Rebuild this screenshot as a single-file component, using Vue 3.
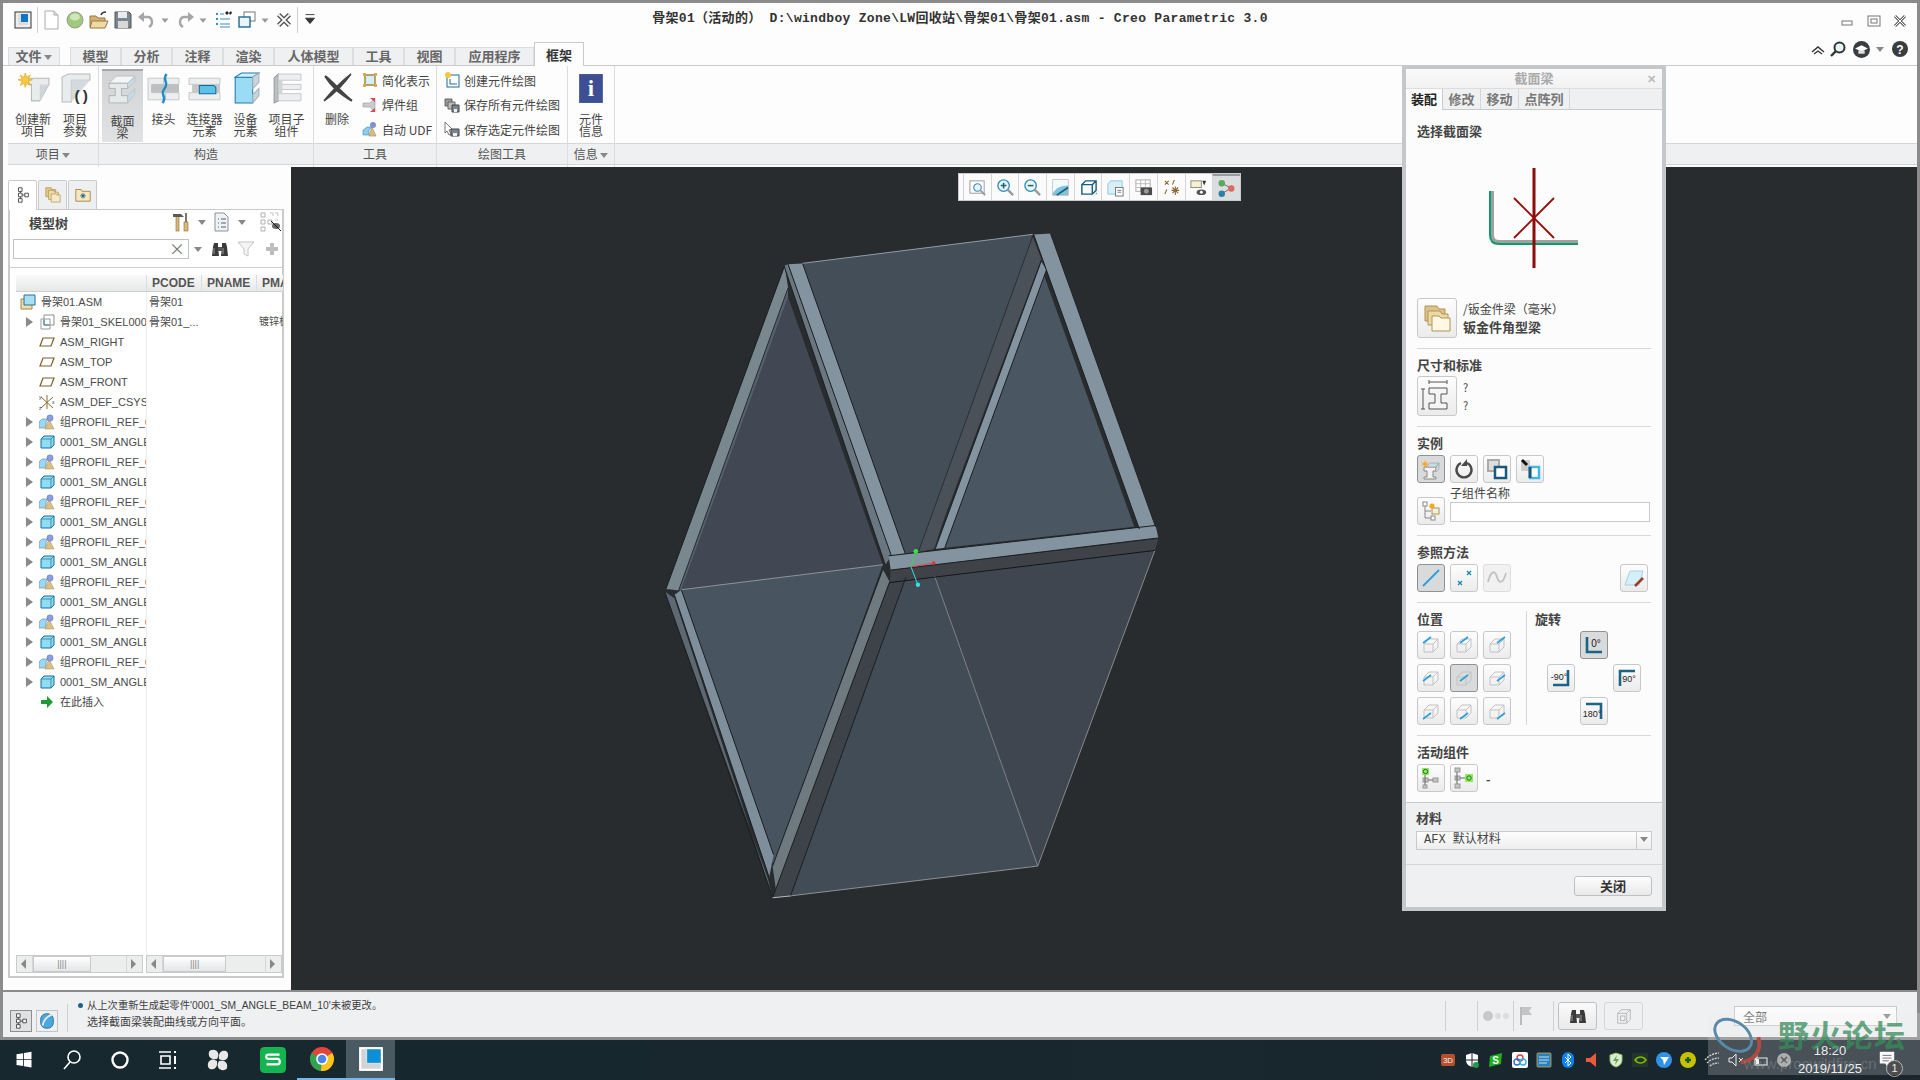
<template>
  <div class="app">
    <div class="window">
      <!-- title bar -->
      <header class="titlebar">
        <div class="quick">
          <template v-for="q in quickIcons" :key="q.key">
            <span v-if="q.sep" class="qsep"></span>
            <svg :class="q.cls" viewBox="0 0 20 20" v-html="icons[q.id]"></svg>
          </template>
        </div>
        <div class="title">骨架01（活动的） D:\windboy Zone\LW回收站\骨架01\骨架01.asm - Creo Parametric 3.0</div>
        <div class="winbtns">
          <svg class="wb" viewBox="0 0 16 16"><rect x="3" y="7" width="10" height="4" fill="none" stroke="#777"/></svg>
          <svg class="wb" viewBox="0 0 16 16"><rect x="2" y="2" width="12" height="10" fill="none" stroke="#777"/><rect x="5" y="5" width="6" height="4" fill="none" stroke="#777"/></svg>
          <svg class="wb" viewBox="0 0 16 16"><path d="M3 2l10 10M13 2L3 12" stroke="#666" stroke-width="3" fill="none"/><path d="M3 2l10 10M13 2L3 12" stroke="#fff" stroke-width="1" fill="none"/></svg>
        </div>
      </header>

      <!-- ribbon tabs -->
      <nav class="tabs">
        <div class="tab file">文件 <i class="caret"></i></div>
        <div class="tab" v-for="t in tabs" :key="t" :class="{ wide: t.length > 2 }">{{ t }}</div>
        <div class="tab active">框架</div>
        <div class="helpers">
          <svg class="hp" viewBox="0 0 16 16"><path d="M2 11l6-5 6 5M4 13l4-3 4 3" fill="none" stroke="#333" stroke-width="1.4"/></svg>
          <svg class="hp" viewBox="0 0 16 16"><circle cx="9.5" cy="6.5" r="5" fill="#e6f3fb" stroke="#333" stroke-width="2"/><path d="M6 10l-5 5" stroke="#333" stroke-width="2.4"/></svg>
          <svg class="hp hat" viewBox="0 0 16 16"><circle cx="8" cy="8" r="8" fill="#3a3d40"/><path d="M2 7l6-3 6 3-6 3z" fill="#fff"/><path d="M5 9v3h6V9" fill="#ddd"/></svg>
          <i class="caret hc"></i>
          <svg class="hp" viewBox="0 0 16 16"><circle cx="8" cy="8" r="8" fill="#3a3d40"/><text x="8" y="12.5" font-size="12" font-weight="700" text-anchor="middle" fill="#fff" font-family="Liberation Sans">?</text></svg>
        </div>
      </nav>

      <!-- ribbon -->
      <section class="ribbon">
        <div class="group g1">
          <div class="gbody">
            <div class="big" v-for="b in bigProject" :key="b.label">
              <svg viewBox="0 0 32 32" v-html="icons[b.icon]"></svg>
              <span v-html="b.label"></span>
            </div>
          </div>
          <div class="glabel">项目 <i class="caret"></i></div>
        </div>
        <div class="group g2">
          <div class="gbody pad3">
            <div class="big" v-for="b in bigBuild" :key="b.label" :class="{ pressed: b.on }">
              <svg viewBox="0 0 32 32" v-html="icons[b.icon]"></svg>
              <span v-html="b.label"></span>
            </div>
          </div>
          <div class="glabel">构造</div>
        </div>
        <div class="group g3">
          <div class="gbody">
            <div class="big del">
              <svg viewBox="0 0 32 32" v-html="icons.del"></svg>
              <span>删除</span>
            </div>
            <div class="smalls">
              <div class="small" v-for="s in toolsList" :key="s.label">
                <svg viewBox="0 0 16 16" v-html="icons[s.icon]"></svg>{{ s.label }}
              </div>
            </div>
          </div>
          <div class="glabel">工具</div>
        </div>
        <div class="group g4">
          <div class="gbody">
            <div class="smalls s2">
              <div class="small" v-for="s in drawList" :key="s.label">
                <svg viewBox="0 0 16 16" v-html="icons[s.icon]"></svg>{{ s.label }}
              </div>
            </div>
          </div>
          <div class="glabel">绘图工具</div>
        </div>
        <div class="group g5">
          <div class="gbody">
            <div class="big info">
              <svg viewBox="0 0 32 32" v-html="icons.info"></svg>
              <span>元件<br />信息</span>
            </div>
          </div>
          <div class="glabel">信息 <i class="caret"></i></div>
        </div>
        <div class="group grest">
          <div class="gbody"></div>
          <div class="glabel"></div>
        </div>
      </section>

      <main class="workspace">
        <!-- model tree -->
        <aside class="side">
          <div class="sidetabs">
            <div class="stab on"><svg viewBox="0 0 16 20" v-html="icons.treeTab"></svg></div>
            <div class="stab"><svg viewBox="0 0 20 20" v-html="icons.folders"></svg></div>
            <div class="stab"><svg viewBox="0 0 20 20" v-html="icons.folderStar"></svg></div>
          </div>
          <div class="panel">
            <div class="treehead">
              <b>模型树</b>
              <svg class="th1" viewBox="0 0 18 20" v-html="icons.hammer"></svg>
              <i class="caret"></i>
              <svg class="th2" viewBox="0 0 18 20" v-html="icons.listdoc"></svg>
              <i class="caret"></i>
              <svg class="th3" viewBox="0 0 22 20" v-html="icons.treeEye"></svg>
            </div>
            <div class="searchrow">
              <div class="search"><span>×</span></div>
              <i class="caret"></i>
              <svg viewBox="0 0 18 18" v-html="icons.binoc"></svg>
              <svg viewBox="0 0 18 18"><path d="M1 2h16l-6 7v7l-4-2V9z" fill="#f4f4f4" stroke="#c4c4c4"/></svg>
              <svg viewBox="0 0 18 18"><path d="M7 3h4v4h4v4h-4v4H7v-4H3V7h4z" fill="#bdbdbd"/></svg>
            </div>
            <div class="tree">
              <div class="row header">
                <div class="cell"></div>
                <div class="cell">PCODE</div>
                <div class="cell">PNAME</div>
                <div class="cell clip">PMA</div>
              </div>
              <div class="row" v-for="r in treeRows" :key="r.key">
                <div class="cell name" :class="{ root: r.icon === 'asm' }">
                  <i v-if="r.arrow" class="arrow"></i>
                  <svg viewBox="0 0 16 16" v-html="icons[r.icon]"></svg>
                  <span>{{ r.name }}</span>
                </div>
                <div class="cell">{{ r.pcode }}</div>
                <div class="cell"></div>
                <div class="cell clip pma">{{ r.pma }}</div>
              </div>
              <div class="row insert">
                <div class="cell name">
                  <svg viewBox="0 0 16 16"><path d="M2 6h6V2l6 6-6 6v-4H2z" fill="#1d9a36"/></svg>
                  <span>在此插入</span>
                </div>
              </div>
            </div>
            <div class="scrolls">
              <div class="sbar" v-for="n in 2" :key="n">
                <i class="sarrow l"></i>
                <div class="track"><div class="thumb"><span>||||</span></div></div>
                <i class="sarrow r"></i>
              </div>
            </div>
          </div>
        </aside>

        <!-- graphics window -->
        <div class="viewport">
          <svg class="model" viewBox="291 166 1626 824" preserveAspectRatio="xMinYMin">
            <g transform="translate(640 220) scale(0.3444 0.4464)">
              <polygon v-for="(p, i) in faces" :key="i" :points="p.pts" :fill="p.fill" />
              <polyline v-for="(l, i) in edges" :key="'e' + i" :points="l.pts" :stroke="l.c" fill="none" vector-effect="non-scaling-stroke" />
              <path d="M787 775L800 740" stroke="#35d948" vector-effect="non-scaling-stroke" />
              <path d="M787 775L853 766" stroke="#e04545" vector-effect="non-scaling-stroke" />
              <path d="M787 775L807 815" stroke="#35e0e0" vector-effect="non-scaling-stroke" />
              <ellipse cx="801" cy="740" rx="7" ry="5" fill="#35e23f" />
              <ellipse cx="853" cy="766" rx="5" ry="4" fill="#e23535" />
              <ellipse cx="807" cy="815" rx="6" ry="5" fill="#35e6e6" />
            </g>
          </svg>
          <div class="viewbar">
            <div class="vb" v-for="v in viewIcons" :key="v" :class="{ on: v === 'vTree' }">
              <svg viewBox="0 0 20 20" v-html="icons[v]"></svg>
            </div>
          </div>
        </div>
      </main>

      <!-- status bar -->
      <footer class="status">
        <div class="sbtn on"><svg viewBox="0 0 16 20" v-html="icons.treeTab"></svg></div>
        <div class="sbtn"><svg viewBox="0 0 20 20" v-html="icons.globe"></svg></div>
        <div class="msgs">
          <p class="m1"><i class="dot"></i>从上次重新生成起零件'0001_SM_ANGLE_BEAM_10'未被更改。</p>
          <p>选择截面梁装配曲线或方向平面。</p>
        </div>
        <div class="sright">
          <span class="sep s1"></span>
          <span class="sep s2"></span>
          <div class="lights"><i></i><i></i><i></i></div>
          <span class="sep s3"></span>
          <svg class="flag" viewBox="0 0 14 20"><path d="M2 1v18" stroke="#bbb" stroke-width="2"/><path d="M3 1h10l-3 4 3 4H3z" fill="#c4c4c4"/></svg>
          <span class="sep s4"></span>
          <div class="srb"><svg viewBox="0 0 18 18" v-html="icons.binoc"></svg></div>
          <div class="srb off"><svg viewBox="0 0 20 20" fill="none" stroke="#b5b5b5"><path d="M3 7l4-4h10v11l-4 4H3zM3 7h10v11M13 7l4-4"/><rect x="6" y="10" width="5" height="5"/></svg></div>
          <div class="filter"><span>全部</span><i class="caret"></i></div>
        </div>
      </footer>
    </div>

    <!-- windows taskbar -->
    <div class="taskbar">
      <div class="task" v-for="t in taskIcons" :key="t.id" :class="t.cls">
        <svg viewBox="0 0 24 24" v-html="icons[t.id]"></svg>
      </div>
      <div class="tray">
        <svg v-for="(t, i) in trayIcons" :key="i" viewBox="0 0 16 16" v-html="icons[t]"></svg>
      </div>
      <div class="clock"><div>18:20</div><div>2019/11/25</div></div>
      <div class="notify">
        <svg viewBox="0 0 20 20"><path d="M2 2h16v13h-6l-2 3-2-3H2z" fill="#fff"/><path d="M5 6h10M5 9h10M5 12h7" stroke="#445" stroke-width="1"/></svg>
        <span>1</span>
      </div>
    </div>

    <!-- forum watermark -->
    <div class="watermark">
      <svg viewBox="0 0 60 60"><ellipse cx="24" cy="22" rx="21" ry="14" transform="rotate(35 24 22)" fill="none" stroke="#5b8aa8" stroke-width="3"/><path d="M32 50c14-2 22-12 18-26" fill="none" stroke="#b04a42" stroke-width="4"/></svg>
      <b>野火论坛</b>
      <small>www.proewildfire.cn</small>
    </div>

    <!-- section beam dialog -->
    <div class="dialog">
      <div class="dtitle">截面梁<span>✕</span></div>
      <div class="dtabs">
        <div class="dtab on">装配</div>
        <div class="dtab">修改</div>
        <div class="dtab">移动</div>
        <div class="dtab w3">点阵列</div>
      </div>
      <div class="dbody">
        <h4>选择截面梁</h4>
        <div class="preview">
          <svg viewBox="0 0 100 100">
            <path d="M3 23v44q0 7 7 7h79" fill="none" stroke="#a1a1a1" stroke-width="4"/>
            <path d="M1 23v44q0 9 9 9h79" fill="none" stroke="#0c9c6a" stroke-width="2"/>
            <path d="M45 0v100" stroke="#8c0b0b" stroke-width="3"/>
            <path d="M25 30l40 40M65 30L25 70" stroke="#980808" stroke-width="1.8"/>
          </svg>
        </div>
        <div class="libline">
          <div class="dbtn big40"><svg viewBox="0 0 32 32" v-html="icons.bigFolders"></svg></div>
          <div class="libtext"><div>/钣金件梁（毫米）</div><b>钣金件角型梁</b></div>
        </div>
        <hr />
        <h4>尺寸和标准</h4>
        <div class="libline tight">
          <div class="dbtn big40"><svg viewBox="0 0 32 32" v-html="icons.dims"></svg></div>
          <div class="qmarks"><div>?</div><div>?</div></div>
        </div>
        <hr />
        <h4>实例</h4>
        <div class="btnrow">
          <div class="dbtn on"><svg viewBox="0 0 22 22" v-html="icons.instNew"></svg></div>
          <div class="dbtn"><svg viewBox="0 0 22 22"><path d="M14 5a7.5 7.5 0 1 1-6 0" fill="none" stroke="#4a4a4a" stroke-width="2.4"/><path d="M14 1v7h-6z" fill="#4a4a4a"/></svg></div>
          <div class="dbtn"><svg viewBox="0 0 22 22"><rect x="2" y="2" width="11" height="11" fill="#ddd" stroke="#aaa" stroke-width="2"/><rect x="9" y="9" width="11" height="11" fill="#fff" stroke="#175a7d" stroke-width="2.5"/></svg></div>
          <div class="dbtn"><svg viewBox="0 0 22 22"><rect x="2" y="2" width="9" height="11" fill="#ccc"/><path d="M3 2l5 5" stroke="#111" stroke-width="3"/><rect x="11" y="9" width="9" height="11" fill="#fff" stroke="#47b6e6" stroke-width="2.5"/><path d="M11 9v11" stroke="#175a7d" stroke-width="3"/></svg></div>
        </div>
        <div class="subline">
          <div class="dbtn"><svg viewBox="0 0 22 22" v-html="icons.subTree"></svg></div>
          <div class="subname"><label>子组件名称</label><div class="dinput"></div></div>
        </div>
        <hr />
        <h4>参照方法</h4>
        <div class="btnrow">
          <div class="dbtn on"><svg viewBox="0 0 22 22"><path d="M3 19L19 3" stroke="#2a9fd8" stroke-width="1.8"/></svg></div>
          <div class="dbtn"><svg viewBox="0 0 22 22"><path d="M5 14l4 4m0-4l-4 4M14 4l4 4m0-4l-4 4" stroke="#1a86b8" stroke-width="1.3"/></svg></div>
          <div class="dbtn off"><svg viewBox="0 0 22 22"><path d="M2 15c3-12 7-12 9-5s6 7 9-4" fill="none" stroke="#c2c2c2" stroke-width="1.8"/></svg></div>
          <div class="dbtn last"><svg viewBox="0 0 22 22"><path d="M7 4h13l-4 14H2z" fill="#d6f0f8" stroke="#a5d3e5"/><path d="M12 19l8-8" stroke="#a03a2c" stroke-width="2.5"/></svg></div>
        </div>
        <hr />
        <div class="posrot">
          <div class="pos">
            <h4>位置</h4>
            <div class="posgrid">
              <div class="dbtn" v-for="(c, i) in cubes" :key="i" :class="{ on: i === 4 }">
                <svg viewBox="0 0 22 22" v-html="c"></svg>
              </div>
            </div>
          </div>
          <div class="rot">
            <h4>旋转</h4>
            <div class="rotgrid">
              <div class="dbtn on r0"><svg viewBox="0 0 22 22" v-html="rot.a"></svg></div>
              <div class="dbtn r1"><svg viewBox="0 0 22 22" v-html="rot.b"></svg></div>
              <div class="dbtn r2"><svg viewBox="0 0 22 22" v-html="rot.c"></svg></div>
              <div class="dbtn r3"><svg viewBox="0 0 22 22" v-html="rot.d"></svg></div>
            </div>
          </div>
        </div>
        <hr />
        <h4>活动组件</h4>
        <div class="btnrow">
          <div class="dbtn"><svg viewBox="0 0 22 22" v-html="icons.active1"></svg></div>
          <div class="dbtn"><svg viewBox="0 0 22 22" v-html="icons.active2"></svg></div>
          <span class="dash">-</span>
        </div>
      </div>
      <div class="material">
        <h4>材料</h4>
        <div class="select"><span>AFX 默认材料</span><div class="selarrow"><i class="caret"></i></div></div>
      </div>
      <div class="dfoot"><button class="close">关闭</button></div>
    </div>
  </div>
</template>

<script setup>
const tabs = ["模型", "分析", "注释", "渲染", "人体模型", "工具", "视图", "应用程序"]

const icons = {
  logo: '<rect x="2" y="2" width="16" height="16" fill="#eee" stroke="#333"/><rect x="5" y="4" width="10" height="11" fill="#0e76c2"/><path d="M5 4v11h10v-3H8V4z" fill="#ddd"/>',
  doc: '<path d="M4 1h9l4 4v14H4z" fill="#fff" stroke="#aaa"/><path d="M13 1v4h4" fill="#ddd" stroke="#aaa"/>',
  ball: '<circle cx="10" cy="10" r="8" fill="#9fca7c" stroke="#999"/><ellipse cx="10" cy="7" rx="5" ry="3.5" fill="#cfe8b6"/>',
  open: '<path d="M1 6h6l2 2h7v9H1z" fill="#d4b070" stroke="#96793e"/><path d="M3 11h16l-3 7H1z" fill="#efd9a4" stroke="#96793e"/><path d="M12 5c1-3 3-3 5-3" stroke="#333" stroke-width="1.6" fill="none"/>',
  save: '<path d="M2 2h14l2 2v14H2z" fill="#7a8793" stroke="#555"/><rect x="5" y="2" width="9" height="6" fill="#e8ecef"/><rect x="5" y="11" width="10" height="7" fill="#d8d8d8"/>',
  undo: '<path d="M5 7h6c4 0 6 7 1 10" fill="none" stroke="#a6a6a6" stroke-width="2.4"/><path d="M7 2v10L1 7z" fill="#a6a6a6"/>',
  redo: '<path d="M15 7H9c-4 0-6 7-1 10" fill="none" stroke="#a6a6a6" stroke-width="2.4"/><path d="M13 2v10l6-5z" fill="#a6a6a6"/>',
  regen: '<path d="M3 3h2v2H3zM3 8h2v2H3zM3 13h2v2H3z" fill="#3a8dbd"/><path d="M7 4h4M7 9h10M7 14h10M7 17h10" stroke="#3a8dbd"/><path d="M12 3l2-2 2 2-2 2zM16 3l2-2 1 2-2 2z" fill="#222"/>',
  wins: '<rect x="7" y="2" width="11" height="9" fill="#fff" stroke="#777"/><rect x="2" y="7" width="11" height="10" fill="#eaf4fa" stroke="#1f6a8f" stroke-width="1.4"/>',
  closeWin: '<path d="M4 4l12 12M16 4L4 16" stroke="#555" stroke-width="5"/><path d="M4 4l12 12M16 4L4 16" stroke="#fff" stroke-width="2"/>',
  custom: '<path d="M5 4h10M5 8l5 6 5-6z" stroke="#333" fill="#333"/>',
  drop: '<path d="M5 8h10l-5 6z" fill="#999"/>',

  newItem: '<path d="M11 6h20v6L22 28h-8V12h-3z" fill="#e9eced" stroke="#b5b9bb"/><path d="M22 12v16l9-16z" fill="#cfd5d8"/><path d="M8 1l1.5 4L13 3l-2 3.5 4 1-4 1.5 2 4-3.5-2L8 15l-1-4-4 2 2-4-4-1.5 4-1L3 3l4 2z" fill="#f7c843" stroke="#e6a317" stroke-width=".6"/>',
  params: '<path d="M3 5l6-3h21v6H12v21H3z" fill="#e9eced" stroke="#b5b9bb"/><path d="M12 8h18l-18 21z" fill="#d4dadd"/><text x="15" y="28" font-size="15" font-weight="700" letter-spacing="3" fill="#333" font-family="Liberation Sans">()</text>',
  beam: '<path d="M3 9l7-7h18l-7 7z" fill="#f3f5f6" stroke="#adb2b5" stroke-width=".7"/><path d="M3 9h18v5h-6v7h6v7H3v-7h6v-7H3z" fill="#e6e9ea" stroke="#9fa4a7" stroke-width=".7"/><path d="M21 9l7-7v5l-7 7zM21 21l7-7v5l-7 9z" fill="#c7dbe6" stroke="#a9bcc6" stroke-width=".6"/>',
  joint: '<path d="M1 6h15v6H5v8h11v7H1z" fill="#eceeef" stroke="#b5b9bb" stroke-width=".7"/><path d="M18 6h13v6H18zM18 20h13v7H18z" fill="#eceeef" stroke="#b5b9bb" stroke-width=".7"/><rect x="4" y="12" width="27" height="8" fill="#bdbfc0"/><path d="M19 2c-5 6 3 8-2 14s3 8-2 14" fill="none" stroke="#1f8dc5" stroke-width="2.4"/>',
  conn: '<path d="M1 6h30v6H1zM1 20h30v7H1z" fill="#eceeef" stroke="#b5b9bb" stroke-width=".7"/><rect x="4" y="12" width="27" height="8" fill="#c5c7c8"/><path d="M11 13h14l2 2v6H11z" fill="#5cc2ea" stroke="#156b96"/>',
  equip: '<path d="M6 5h17v25H6z" fill="#9bdcf5" stroke="#207ba6"/><path d="M6 5l6-4h17l-6 4z" fill="#d2f0fb" stroke="#207ba6"/><path d="M23 5l6-4v9l-6 6zM23 22l6-6v7l-6 7z" fill="#c6d6de" stroke="#a0b0b8"/>',
  sub: '<path d="M4 6l4-4v26l-4 2z" fill="#bcc0c2" stroke="#999"/><path d="M8 2h22v6H8zM8 12h22v5H8zM8 21h22v7H8z" fill="#eceeef" stroke="#b5b9bb" stroke-width=".7"/><path d="M8 8v13h4V8z" fill="#d0d4d6"/>',
  del: '<path d="M4 4c8 6 14 14 26 24-12-7-19-13-26-24z" fill="#444" stroke="#444" stroke-width="2"/><path d="M29 2C20 9 11 18 3 28c10-7 18-15 26-26z" fill="#444" stroke="#444" stroke-width="1.6"/>',
  info: '<rect x="4" y="2" width="23" height="28" fill="#3d4f92"/><text x="15.5" y="23" font-size="22" font-weight="700" fill="#fff" text-anchor="middle" font-family="Liberation Serif">i</text>',

  simp: '<rect x="3" y="3" width="10" height="10" fill="#d4eef6" stroke="#b08a42" stroke-width="1.6"/><path d="M1 1h3v3H1zM12 1h3v3h-3zM1 12h3v3H1zM12 12h3v3h-3z" fill="#d3a95c"/>',
  weld: '<path d="M1 6h7l5-5v14l-5-5H1z" fill="#c8ccce" stroke="#999" stroke-width=".6"/><path d="M8 1l5 4V1zM8 15l5-4v4z" fill="#e0444d"/>',
  udf: '<path d="M1 9l4-3h5l-3 3v5H1z" fill="#8dcaec" stroke="#4490bb" stroke-width=".6"/><path d="M10 6l4 9H7z" fill="#d9bd83" stroke="#a8894a" stroke-width=".6"/><circle cx="11" cy="4" r="3" fill="#7f93d4"/>',
  drawNew: '<rect x="3" y="3" width="12" height="12" fill="#fff" stroke="#1f6a8f"/><path d="M6 7v5h7" fill="none" stroke="#1f6a8f"/><circle cx="4" cy="3" r="3" fill="#f7c843"/>',
  saveAll: '<path d="M1 2h7v7H1z" fill="#999" stroke="#666"/><path d="M4 5h7v7H4z" fill="#bbb" stroke="#666"/><path d="M8 8h7v7H8z" fill="#7a8793" stroke="#444"/><rect x="10" y="12" width="3" height="3" fill="#eee"/>',
  saveSel: '<path d="M1 1l7 7-3 1 2 4-2 1-2-4-2 2z" fill="#fff" stroke="#555" stroke-width=".8"/><path d="M7 8h8v7H7z" fill="#7a8793" stroke="#444"/><rect x="9" y="12" width="4" height="3" fill="#eee"/>',

  treeTab: '<path d="M3 2h4v4H3zM3 8h4v4H3zM3 14h4v4H3zM10 8h4v4h-4z" fill="#fff" stroke="#444"/><path d="M5 6v2M5 12v2M7 10h3" stroke="#444"/>',
  folders: '<path d="M2 3h6l1 2h4v8H2z" fill="#e3c789" stroke="#aa8a48" stroke-width=".7"/><path d="M5 6h6l1 2h4v8H5z" fill="#eedaa8" stroke="#aa8a48" stroke-width=".7"/><path d="M8 10h5l1 1h4v8H8z" fill="#f7e9c6" stroke="#aa8a48" stroke-width=".7"/>',
  folderStar: '<path d="M2 5h6l1 2h9v11H2z" fill="#f6e7c1" stroke="#a58644"/><path d="M10 9v6M7 12h6M8 10l4 4M12 10l-4 4" stroke="#16607f"/>',
  hammer: '<rect x="4" y="4" width="3" height="15" fill="#d8ba7c" stroke="#8a6a2a" stroke-width=".6"/><path d="M1 2h8l3 3H1z" fill="#5a5a5a"/><rect x="13" y="1" width="2" height="9" fill="#777"/><rect x="12" y="10" width="4" height="9" fill="#d8ba7c" stroke="#8a6a2a" stroke-width=".6"/>',
  listdoc: '<path d="M3 1h9l4 4v14H3z" fill="#eef2f4" stroke="#8a9298"/><path d="M6 7h1M9 7h5M6 11h1M9 11h5M6 15h1M9 15h5" stroke="#5a6166"/>',
  treeEye: '<path d="M1 1h4v4H1zM1 8h4v4H1zM1 15h4v4H1zM8 8h4v4H8z" fill="#fff" stroke="#b0b0b0"/><path d="M10 1h3v3M15 1h3v3M15 8h3" fill="none" stroke="#c4c4c4"/><ellipse cx="16" cy="14" rx="4" ry="3" fill="#666"/><path d="M11 9l10 10" stroke="#111"/>',
  binoc: '<path d="M3 3h4v4l1 9H1l1-9zM11 3h4l1 4 1 9h-7l1-9z" fill="#3a3a3a"/><rect x="7" y="7" width="4" height="4" fill="#555"/><path d="M3 8v6M12 8v6" stroke="#999"/>',
  globe: '<rect x="3" y="2" width="14" height="16" rx="6" fill="#4ea6de" stroke="#26709f"/><path d="M5 15c2-8 6-11 12-13" stroke="#dff1fb" stroke-width="2" fill="none"/>',

  asm: '<path d="M1 5h11v10H1z" fill="#f2dfad" stroke="#a58644"/><path d="M4 1h11v10H4z" fill="#a9dff5" stroke="#266e96"/>',
  skel: '<path d="M2 5h9v10H2z" fill="#fff" stroke="#999"/><path d="M5 1h10v10H5z" fill="none" stroke="#8a8f93"/><path d="M5 6v5h5" fill="none" stroke="#3a7ea6"/>',
  plane: '<path d="M4 4h11l-3 8H1z" fill="none" stroke="#7d5c26" stroke-width="1.2"/>',
  csys: '<path d="M2 14L14 3M2 3l12 11M8 1v14" stroke="#8b6a33"/><text x="0" y="5" font-size="5" fill="#333" font-family="Liberation Sans">y</text><text x="0" y="15.5" font-size="5" fill="#333" font-family="Liberation Sans">z</text><text x="13" y="10" font-size="5" fill="#333" font-family="Liberation Sans">x</text>',
  group: '<path d="M0 8l3-3h6l-2 3v6H0z" fill="#9fd6f0" stroke="#3f8fb8" stroke-width=".6"/><path d="M10 5l5 10H6z" fill="#dcbf85" stroke="#a88a4a" stroke-width=".5"/><circle cx="11" cy="4" r="3.2" fill="#8b9ddc" stroke="#5c6db0" stroke-width=".4"/>',
  part: '<path d="M2 5l3-3h10v9l-3 3H2z" fill="#8fdcf7" stroke="#1c6f97"/><path d="M2 5h10v9M12 5l3-3" fill="none" stroke="#1c6f97" stroke-width=".7"/>',

  vFit: '<rect x="2" y="3" width="15" height="13" fill="#fff" stroke="#999"/><circle cx="10" cy="10" r="4" fill="#e6f3fb" stroke="#3a8dbd" stroke-width="1.2"/><path d="M13 13l5 5" stroke="#999" stroke-width="2"/>',
  vIn: '<circle cx="8" cy="8" r="6" fill="#eaf6fc" stroke="#2d8cb4" stroke-width="1.4"/><path d="M5 8h6M8 5v6" stroke="#17617f" stroke-width="1.6"/><path d="M12 12l6 6" stroke="#999" stroke-width="2.4"/>',
  vOut: '<circle cx="8" cy="8" r="6" fill="#eaf6fc" stroke="#2d8cb4" stroke-width="1.4"/><path d="M5 8h6" stroke="#17617f" stroke-width="1.6"/><path d="M12 12l6 6" stroke="#999" stroke-width="2.4"/>',
  vRef: '<rect x="2" y="2" width="16" height="16" fill="#7fc4df" stroke="#aaa"/><path d="M2 2h16v6C10 8 5 11 2 16z" fill="#f2fafd"/><path d="M6 18L18 10" stroke="#16607f" stroke-width="1.8"/>',
  vCube: '<path d="M3 7l4-4h11v10l-4 4H3zM3 7h11v10M14 7l4-4" fill="none" stroke="#14617f" stroke-width="1.5"/><path d="M17 17l2 0 0-2z" fill="#888"/>',
  vCube2: '<path d="M2 6l3-3h12v10l-3 4H2z" fill="#d8eef8" stroke="#8fc6de"/><rect x="10" y="10" width="8" height="9" fill="#fff" stroke="#777"/><path d="M12 13h4M12 15h4" stroke="#777"/>',
  vCam: '<rect x="2" y="2" width="15" height="12" fill="#fff" stroke="#aaa"/><path d="M2 6h15M2 10h15M7 2v12M12 2v12" stroke="#bbb"/><rect x="7" y="10" width="12" height="8" fill="#4a4a4a"/><circle cx="13" cy="14" r="2.6" fill="#999"/>',
  vCsys: '<path d="M3 3l4 4m0-4L3 7M13 2l-2 5M5 12l-2 5M14 9v9M10 13h8M11 10l6 6m0-6l-6 6" stroke="#8b6a33" stroke-width="1.2"/>',
  vShow: '<rect x="2" y="3" width="11" height="7" fill="#f6efd2" stroke="#888"/><path d="M14 3h4l-2 5z" fill="#333"/><ellipse cx="13" cy="15" rx="5" ry="3" fill="#555"/><circle cx="13" cy="15" r="1.5" fill="#fff"/>',
  vTree: '<path d="M6 5l8 4M6 15l8-5" stroke="#666"/><circle cx="5" cy="4.5" r="3.4" fill="#5da65e"/><circle cx="5" cy="15.5" r="3.4" fill="#2e7ea8"/><circle cx="15" cy="10" r="3.4" fill="#d96b62"/>',

  start: '<path d="M3 5l8-1.2V11H3zM12 3.6L21 2v9h-9zM3 12h8v7.2L3 18zM12 12h9v9l-9-1.4z" fill="#fff"/>',
  search: '<circle cx="14" cy="9" r="6" fill="none" stroke="#fff" stroke-width="1.6"/><path d="M10 14l-6 7" stroke="#fff" stroke-width="1.6"/>',
  cortana: '<circle cx="12" cy="12" r="7.5" fill="none" stroke="#fff" stroke-width="2.4"/>',
  taskview: '<path d="M3 4h12M3 20h12M5 8h9v8H5z" fill="none" stroke="#fff" stroke-width="1.6"/><rect x="18" y="3" width="2" height="2" fill="#fff"/><rect x="18" y="8" width="2" height="8" fill="#fff"/><rect x="18" y="19" width="2" height="2" fill="#fff"/>',
  fan: '<path d="M11 11C4 12 2 8 3 4c1-3 8-3 9 1 1 2 0 4-1 6zM13 11c-1-7 3-9 7-8 3 1 3 8-1 9-2 1-4 0-6-1zM13 13c7-1 9 3 8 7-1 3-8 3-9-1-1-2 0-4 1-6zM11 13c1 7-3 9-7 8-3-1-3-8 1-9 2-1 4 0 6 1z" fill="#e8e8e8"/>',
  sheet: '<rect x="0" y="0" width="24" height="24" rx="4" fill="#14b44e"/><path d="M18 7H8c-3 0-3 4 0 4h8c3 0 3 5 0 5H6" fill="none" stroke="#fff" stroke-width="2"/>',
  chrome: '<circle cx="12" cy="12" r="11" fill="#e2453a"/><path d="M12 12L2.5 6.5A11 11 0 0 0 11 23z" fill="#2fa34f"/><path d="M12 12l9.5-5.5A11 11 0 0 1 11 23z" fill="#f9c51d"/><circle cx="12" cy="12" r="5.4" fill="#fff"/><circle cx="12" cy="12" r="4" fill="#4a86e8"/>',
  creo: '<rect x="1" y="1" width="22" height="22" fill="#fff"/><rect x="3" y="3" width="18" height="18" fill="#d4d4d4"/><path d="M8 3h13v13H8z" fill="#0d8fd8"/><path d="M8 3v13h13" fill="none" stroke="#eee" stroke-width=".8"/>',

  t30: '<rect x="1" y="2" width="14" height="12" rx="2" fill="#b5502c"/><text x="8" y="11" font-size="8" text-anchor="middle" fill="#eee" font-family="Liberation Sans">3D</text>',
  tShield: '<path d="M8 1l6 2v5c0 4-3 6-6 7-3-1-6-3-6-7V3z" fill="#fff"/><path d="M8 1v14M2 8h12" stroke="#222" stroke-width="1"/><circle cx="12" cy="13" r="3" fill="#1a9c4c"/>',
  tS: '<path d="M2 4l12-3-1 11-12 3z" fill="#1eb01e"/><text x="7.6" y="12" font-size="10" font-weight="700" text-anchor="middle" fill="#fff" font-family="Liberation Sans">S</text>',
  tBaidu: '<rect x="0" y="0" width="16" height="16" rx="2" fill="#fff"/><circle cx="8" cy="6" r="3" fill="none" stroke="#e23a3a" stroke-width="1.4"/><circle cx="5" cy="10" r="3" fill="none" stroke="#2a6fe6" stroke-width="1.4"/><circle cx="11" cy="10" r="3" fill="none" stroke="#2ab2e6" stroke-width="1.4"/>',
  tBlue: '<rect x="1" y="1" width="14" height="14" rx="1" fill="#2c7fbd" stroke="#c9a84c" stroke-width=".8"/><path d="M3 5h10M3 8h10M3 11h8" stroke="#bfe3f6"/>',
  tBt: '<rect x="2" y="0" width="12" height="16" rx="6" fill="#0a82f0"/><path d="M5 5l6 6-3 3V2l3 3-6 6" fill="none" stroke="#fff"/>',
  tVol: '<path d="M2 6h4l6-5v14l-6-5H2z" fill="#ea5b3b"/>',
  t360: '<path d="M8 1l6 2v5c0 4-3 6-6 7-3-1-6-3-6-7V3z" fill="#dfeadf" stroke="#8cc24a"/><path d="M9 3L5 9h3l-1 4 4-6H8z" fill="#5ea82f"/>',
  tNv: '<rect x="0" y="1" width="16" height="14" fill="#26332e"/><path d="M3 8c3-4 8-4 11 0-3 4-8 4-11 0z" fill="none" stroke="#76b900" stroke-width="1.6"/>',
  tArrow: '<circle cx="8" cy="8" r="8" fill="#2f93ea"/><path d="M4 5l9 0-5 8-1-5z" fill="#fff"/>',
  tPlus: '<circle cx="8" cy="8" r="8" fill="#c7c200"/><path d="M5 8h6M8 5v6" stroke="#1d5a1d" stroke-width="2.4"/>',
  tWifi: '<path d="M1 8c4-5 10-7 14-7M3 11c3-3 7-5 12-5M6 14c2-2 5-3 9-3" fill="none" stroke="#ddd" stroke-width="1.2" stroke-dasharray="2 1"/>',
  tMute: '<path d="M1 6h3l4-4v12l-4-4H1z" fill="none" stroke="#eee"/><path d="M11 6l4 4m0-4l-4 4" stroke="#eee"/>',
  tBat: '<rect x="3" y="6" width="12" height="7" fill="none" stroke="#eee"/><rect x="4" y="7" width="3" height="5" fill="#eee"/><path d="M2 2v4h3V2M3.500 6v2" stroke="#eee"/>',
  tX: '<circle cx="8" cy="8" r="7" fill="#9a9a9a"/><path d="M5 5l6 6m0-6l-6 6" stroke="#333" stroke-width="1.6"/>',

  bigFolders: '<path d="M4 4h12l2 3h6v12H4z" fill="#dcc387" stroke="#b09450"/><path d="M7 9h12l2 3h6v11H7z" fill="#ecd9a8" stroke="#b09450"/><path d="M11 14h7l2 2h9v13H11z" fill="#fff8e4" stroke="#b09450"/>',
  dims: '<path d="M8 2h18M8 0v4M26 0v4M2 9v20M0 9h4M0 29h4" stroke="#555" fill="none"/><path d="M8 8h18v6h-6v9h6v6H8v-6h6v-9H8z" fill="#f5f5f5" stroke="#555"/>',
  instNew: '<path d="M4 9h12v4h-3v6h3v2H4v-2h3v-6H4z" fill="#f2f2f2" stroke="#888"/><path d="M10 5h9l-3 4H6zM16 9l3-4v6l-3 3z" fill="#c8dce6" stroke="#999" stroke-width=".6"/><path d="M5 2l1 3 3-1-2 2 2 2-3-1-1 3-1-3-3 1 2-2-2-2 3 1z" fill="#f7a81c"/>',
  subTree: '<rect x="3" y="2" width="4" height="4" fill="#fff" stroke="#888"/><rect x="11" y="16" width="4" height="4" fill="#fff" stroke="#888"/><path d="M5 6v12h6M5 11h6" stroke="#888" fill="none"/><rect x="12" y="8" width="7" height="6" fill="#e5f2f8" stroke="#c08f34"/><circle cx="12" cy="6" r="2.6" fill="#f7a81c"/>',
  active1: '<rect x="2" y="1" width="7" height="7" fill="#92e85e"/><circle cx="5.500" cy="4.500" r="2.2" fill="none" stroke="#0c7a22"/><rect x="3" y="11" width="5" height="4" fill="#c4c4c4" stroke="#999"/><rect x="3" y="18" width="4" height="3" fill="#c4c4c4" stroke="#999"/><rect x="13" y="11" width="5" height="4" fill="#c4c4c4" stroke="#999"/><path d="M5 8v10M8 13h5" stroke="#666"/>',
  active2: '<rect x="2" y="1" width="5" height="4" fill="#c4c4c4" stroke="#999"/><rect x="2" y="9" width="5" height="4" fill="#c4c4c4" stroke="#999"/><rect x="2" y="17" width="5" height="4" fill="#c4c4c4" stroke="#999"/><path d="M4 5v12M7 11h5" stroke="#666"/><rect x="12" y="7" width="8" height="8" fill="#92e85e"/><circle cx="16" cy="11" r="2.2" fill="none" stroke="#0c7a22"/>'
}

const quickIcons = [
  { id: "logo", cls: "qi" },
  { id: "doc", cls: "qi", sep: true },
  { id: "ball", cls: "qi" },
  { id: "open", cls: "qi" },
  { id: "save", cls: "qi" },
  { id: "undo", cls: "qi" },
  { id: "drop", cls: "qd" },
  { id: "redo", cls: "qi" },
  { id: "drop", cls: "qd" },
  { id: "regen", cls: "qi" },
  { id: "wins", cls: "qi" },
  { id: "drop", cls: "qd" },
  { id: "closeWin", cls: "qx" },
  { id: "custom", cls: "qx", sep: true }
].map((q, i) => ({ ...q, key: i }))

const bigProject = [
  { label: "创建新<br>项目", icon: "newItem" },
  { label: "项目<br>参数", icon: "params" }
]

const bigBuild = [
  { label: "截面<br>梁", icon: "beam", on: true },
  { label: "接头", icon: "joint" },
  { label: "连接器<br>元素", icon: "conn" },
  { label: "设备<br>元素", icon: "equip" },
  { label: "项目子<br>组件", icon: "sub" }
]

const toolsList = [
  { label: "简化表示", icon: "simp" },
  { label: "焊件组", icon: "weld" },
  { label: "自动 UDF", icon: "udf" }
]

const drawList = [
  { label: "创建元件绘图", icon: "drawNew" },
  { label: "保存所有元件绘图", icon: "saveAll" },
  { label: "保存选定元件绘图", icon: "saveSel" }
]

const treeRows = [
  { name: "骨架01.ASM", pcode: "骨架01", icon: "asm" },
  { name: "骨架01_SKEL0001", pcode: "骨架01_...", pma: "镀锌板", icon: "skel", arrow: true },
  { name: "ASM_RIGHT", icon: "plane" },
  { name: "ASM_TOP", icon: "plane" },
  { name: "ASM_FRONT", icon: "plane" },
  { name: "ASM_DEF_CSYS", icon: "csys" }
]
for (let i = 0; i < 14; i++) {
  treeRows.push(
    i % 2 === 0
      ? { name: "组PROFIL_REF_0001", icon: "group", arrow: true }
      : { name: "0001_SM_ANGLE_BEAM", icon: "part", arrow: true }
  )
}
treeRows.forEach((r, i) => (r.key = i))

const viewIcons = ["vFit", "vIn", "vOut", "vRef", "vCube", "vCube2", "vCam", "vCsys", "vShow", "vTree"]

const taskIcons = [
  { id: "start", cls: "t-start" },
  { id: "search" },
  { id: "cortana" },
  { id: "taskview" },
  { id: "fan", cls: "t-fan" },
  { id: "sheet", cls: "t-app first" },
  { id: "chrome", cls: "t-app open" },
  { id: "creo", cls: "t-app current" }
]

const trayIcons = ["t30", "tShield", "tS", "tBaidu", "tBlue", "tBt", "tVol", "t360", "tNv", "tArrow", "tPlus", "tWifi", "tMute", "tBat", "tX"]

// cube buttons: the blue edge moves with the grid position
const cubes = []
for (let r = 0; r < 3; r++) {
  for (let c = 0; c < 3; c++) {
    const dx = c * 4 - 4
    const dy = r * 5 - 5
    cubes.push(
      '<path d="M4 10l5-5h9v8l-5 5H4zM4 10h9v8M13 10l5-5" fill="none" stroke="#c2c2c2"/>' +
      `<path d="M${7 + dx} ${14 + dy}L${15 + dx} ${8 + dy}" stroke="#2a9fd8" stroke-width="1.6"/>`
    )
  }
}

const rotLabel = (t, x, y, s = 10) => `<text x="${x}" y="${y}" font-size="${s}" fill="#222" text-anchor="middle" font-family="Liberation Sans">${t}</text>`
const rot = {
  a: '<path d="M4 3v15h15" fill="none" stroke="#1b6485" stroke-width="2.6"/>' + rotLabel("0°", 13, 13),
  b: '<path d="M3 18h15V3" fill="none" stroke="#1b6485" stroke-width="2.6"/>' + rotLabel("-90°", 9, 13, 9),
  c: '<path d="M4 19V4h15" fill="none" stroke="#1b6485" stroke-width="2.6"/>' + rotLabel("90°", 13, 15, 9),
  d: '<path d="M3 4h15v15" fill="none" stroke="#1b6485" stroke-width="2.6"/>' + rotLabel("180°", 9, 17, 9)
}

// frame model, points measured in the enlarged crop of the graphics area
const faces = [
  { fill: "#434e58", pts: "470,95 1140,30 855,735 770,745" },
  { fill: "#4a5762", pts: "1172,120 1435,685 885,732" },
  { fill: "#414854", pts: "430,170 705,770 120,826" },
  { fill: "#48545f", pts: "120,826 705,770 388,1445" },
  { fill: "#414c56", pts: "770,800 435,1512 1155,1445 855,795" },
  { fill: "#404650", pts: "855,795 1495,738 1155,1445" },
  { fill: "#79878f", pts: "420,100 430,150 112,828 85,825 75,825" },
  { fill: "#56606c", pts: "430,150 430,170 120,826 112,828" },
  { fill: "#6a7680", pts: "418,100 430,97 730,750 712,770" },
  { fill: "#8493a0", pts: "430,97 472,95 770,745 730,750" },
  { fill: "#4b5159", pts: "1140,35 1165,85 850,735 808,742" },
  { fill: "#8493a0", pts: "1165,90 1180,110 885,732 857,735" },
  { fill: "#6d7882", pts: "1192,28 1205,60 1505,710 1497,685" },
  { fill: "#8493a0", pts: "1143,30 1192,28 1497,685 1450,690" },
  { fill: "#8493a0", pts: "722,750 1497,682 1505,710 728,782" },
  { fill: "#3f4347", pts: "728,782 1505,712 1495,738 725,810" },
  { fill: "#5d6872", pts: "72,830 100,845 385,1515 370,1470" },
  { fill: "#7f8e9b", pts: "100,838 120,826 388,1420 375,1470" },
  { fill: "#6f7a80", pts: "705,780 725,808 395,1500 385,1445" },
  { fill: "#3d4349", pts: "725,808 772,798 437,1512 385,1516" }
]

const edges = [
  { c: "#969ca2", pts: "470,95 1140,30" },
  { c: "#8f959a", pts: "120,826 705,770" },
  { c: "#7f848a", pts: "855,795 1155,1445" },
  { c: "#868a8e", pts: "1495,738 1155,1445" },
  { c: "#8d9194", pts: "435,1512 1155,1445" },
  { c: "#1b1f23", pts: "430,97 730,750" },
  { c: "#1b1f23", pts: "472,95 770,745" },
  { c: "#1b1f23", pts: "418,100 712,770" },
  { c: "#1b1f23", pts: "1143,30 1450,690" },
  { c: "#1b1f23", pts: "1192,28 1497,685" },
  { c: "#1b1f23", pts: "722,750 1497,682" },
  { c: "#1b1f23", pts: "728,782 1505,710" },
  { c: "#14171a", pts: "725,810 1495,738" },
  { c: "#1b1f23", pts: "1165,90 857,735" },
  { c: "#2b3035", pts: "1140,35 808,742" },
  { c: "#1b1f23", pts: "1180,110 885,732" },
  { c: "#1b1f23", pts: "725,808 385,1516" },
  { c: "#1b1f23", pts: "705,780 385,1445" },
  { c: "#1b1f23", pts: "772,798 437,1512" },
  { c: "#1b1f23", pts: "120,826 388,1420" },
  { c: "#1b1f23", pts: "100,838 375,1470" },
  { c: "#1b1f23", pts: "72,830 385,1515" },
  { c: "#1b1f23", pts: "75,825 420,100" },
  { c: "#2a2f34", pts: "112,828 430,150" },
  { c: "#b9bec2", pts: "385,1516 437,1512" }
]
</script>

<style>
html,
body {
  margin: 0;
  background: #1b2930;
  overflow: hidden;
}
</style>

<style scoped>
.app {
  position: relative;
  width: 1920px;
  height: 1080px;
  overflow: hidden;
  font-family: "Noto Sans CJK SC", "Liberation Sans", sans-serif;
  font-size: 12px;
  color: #444;
}

.window {
  height: 1040px;
  box-sizing: border-box;
  border: 3px solid #8b8b8b;
  background: #fdfdfd;
  display: flex;
  flex-direction: column;
}

/* title bar */

.titlebar {
  height: 44px;
  flex: none;
  display: grid;
  grid-template-columns: 1fr auto 1fr;
  align-items: start;
}

.quick {
  display: flex;
  align-items: center;
  height: 34px;
  padding-left: 10px;
  gap: 4px;
}

.qi {
  width: 20px;
  height: 20px;
  flex: none;
}

.qd {
  width: 14px;
  height: 14px;
  margin: 0 -1px 0 -3px;
  flex: none;
}

.qx {
  width: 18px;
  height: 18px;
  flex: none;
}

.qsep {
  width: 1px;
  height: 26px;
  background: #cfd0d2;
  margin-right: -1px;
  flex: none;
}

.title {
  font-family: "Liberation Mono", "Noto Sans CJK SC", monospace;
  font-size: 13px;
  font-weight: 700;
  color: #333;
  line-height: 32px;
  letter-spacing: 0.3px;
}

.winbtns {
  display: flex;
  justify-content: flex-end;
  gap: 10.500px;
  padding: 11px 9px 0 0;
}

.wb {
  width: 16px;
  height: 16px;
}

/* tabs */

.tabs {
  height: 18px;
  flex: none;
  display: flex;
  padding-left: 5px;
  border-bottom: 1px solid #c8cacc;
  font-weight: 700;
  font-size: 13px;
}

.tab {
  width: 51px;
  height: 18px;
  box-sizing: border-box;
  background: #eff0f2;
  border: 1px solid #dcdddf;
  border-bottom: none;
  text-align: center;
  line-height: 15px;
  color: #666;
}

.tab.wide {
  width: 79px;
}

.tab.file {
  width: 52px;
  margin-right: 10px;
}

.tab.active {
  height: 24px;
  margin-top: -5px;
  width: 50px;
  background: #fdfdfd;
  border-color: #c8cacc;
  color: #333;
  line-height: 24px;
  position: relative;
}

.caret {
  display: inline-block;
  width: 0;
  height: 0;
  border: 4px solid transparent;
  border-top: 5px solid #888;
  border-bottom: none;
  vertical-align: middle;
}

.helpers {
  margin-left: auto;
  display: flex;
  align-items: center;
  gap: 4px;
  height: 18px;
  margin-top: -7px;
  padding-right: 9px;
}

.hp {
  width: 16px;
  height: 16px;
}

.hp.hat {
  width: 17px;
  height: 17px;
  margin-left: 3px;
}

.hc {
  margin: 0 4px 0 2px;
}

/* ribbon */

.ribbon {
  height: 101px;
  flex: none;
  display: flex;
  padding-left: 5px;
}

.group {
  display: flex;
  flex-direction: column;
  flex: none;
  border-right: 1px solid #dcdddf;
  box-sizing: border-box;
}

.g1 { width: 91px; }
.g2 { width: 215px; }
.g3 { width: 123px; }
.g4 { width: 131px; }
.g5 { width: 47px; }

.grest {
  flex: 1;
  border-right: none;
}

.gbody {
  height: 77px;
  display: flex;
  flex: none;
  padding-left: 4px;
}

.gbody.pad3 {
  padding-left: 3px;
}

.glabel {
  height: 22px;
  margin-bottom: 1px;
  background: #eff0f2;
  border-top: 1px solid #d5d6d8;
  border-bottom: 1px solid #d5d6d8;
  box-sizing: border-box;
  text-align: center;
  line-height: 20px;
  color: #555;
}

.big {
  width: 42px;
  height: 73px;
  margin-top: 3px;
  flex: none;
  box-sizing: border-box;
  padding-top: 3px;
  display: flex;
  flex-direction: column;
  align-items: center;
  text-align: center;
  line-height: 12px;
}

.g2 .big {
  width: 41px;
}

.big svg {
  width: 33px;
  height: 33px;
  flex: none;
}

.big span {
  margin-top: 8px;
  display: block;
}

.big.pressed {
  background: linear-gradient(#d2d3d5, #e1e2e3);
  border-top: 2px solid #a4a6a8;
}

.big.del {
  margin-left: -2px;
}

.big.info {
  margin: 3px 0 0 -2px;
}

.smalls {
  display: flex;
  flex-direction: column;
  padding: 2px 0 0 4px;
}

.smalls.s2 {
  padding-left: 3px;
}

.small {
  height: 24.500px;
  display: flex;
  align-items: center;
  gap: 4px;
  white-space: nowrap;
}

.small svg {
  width: 16px;
  height: 16px;
  flex: none;
}

/* workspace */

.workspace {
  flex: 1;
  min-height: 0;
  display: flex;
}

.side {
  width: 288px;
  flex: none;
  box-sizing: border-box;
  padding: 13px 0 12px 5px;
  display: flex;
  flex-direction: column;
  background: #fdfdfd;
}

.sidetabs {
  display: flex;
  gap: 1px;
  height: 29px;
  flex: none;
}

.stab {
  width: 29px;
  box-sizing: border-box;
  height: 29px;
  padding-bottom: 2px;
  background: #eeeff1;
  border: 1px solid #c8cacc;
  border-bottom: none;
  border-radius: 2px 2px 0 0;
  display: flex;
  align-items: center;
  justify-content: center;
}

.stab.on {
  background: #fff;
  height: 30px;
  position: relative;
  z-index: 1;
}

.stab svg {
  width: 18px;
  height: 18px;
}

.panel {
  flex: 1;
  min-height: 0;
  width: 276px;
  box-sizing: border-box;
  border: 2px solid #c8cacc;
  border-top-width: 1px;
  background: #fff;
  display: flex;
  flex-direction: column;
}

.treehead {
  height: 28px;
  box-sizing: border-box;
  padding: 0 0 4px 19px;
  display: flex;
  align-items: center;
  flex: none;
}

.treehead b {
  font-size: 13px;
  width: 143px;
}

.treehead svg {
  width: 18px;
  height: 20px;
}

.treehead .caret {
  margin: 0 6px 0 8px;
}

.treehead .th3 {
  width: 22px;
  margin-left: 8px;
}

.searchrow {
  height: 22px;
  flex: none;
  display: flex;
  align-items: center;
  padding: 0 0 7px 3px;
  border-bottom: 1px solid #cfd0d2;
}

.search {
  width: 176px;
  flex: none;
  height: 20px;
  box-sizing: border-box;
  border: 1px solid #c0c2c4;
  background: #fff;
  text-align: right;
  padding-right: 3px;
  color: #777;
  font-size: 16px;
  line-height: 17px;
}

.searchrow svg {
  width: 18px;
  height: 18px;
  flex: none;
  margin-left: 8px;
}

.searchrow .caret {
  margin-left: 5px;
  flex: none;
}

.searchrow .caret + svg {
  margin-left: 9px;
}

.tree {
  flex: 1;
  min-height: 0;
  margin: 7px 0 0 6px;
  width: 267px;
  overflow: hidden;
  background: linear-gradient(#eceded, #eceded) 130px 0 / 1px 100% no-repeat;
  font-family: "Liberation Sans", "Noto Sans CJK SC", sans-serif;
  font-size: 11px;
}

.row {
  display: grid;
  grid-template-columns: 130px 55px 55px 27px;
  height: 20px;
  line-height: 20px;
  align-items: center;
  color: #4a4a4a;
  white-space: nowrap;
}

.row.header {
  height: 16px;
  line-height: 16px;
  background: linear-gradient(#fafafa, #e6e7e8);
  border-bottom: 1px solid #cfd0d2;
  box-sizing: content-box;
  color: #555;
  font-weight: 700;
  font-size: 12px;
}

.row.header .cell {
  padding-left: 5px;
  border-left: 1px solid #dcdddf;
  height: 16px;
}

.row.header .cell:first-child {
  border-left: none;
}

.cell {
  overflow: hidden;
  box-sizing: border-box;
  padding-left: 3px;
}

.cell.clip {
  overflow: hidden;
}

.row.header .cell.clip {
  padding-left: 5px;
}

.cell.pma {
  font-size: 10px;
}

.cell.name {
  position: relative;
  display: flex;
  align-items: center;
  height: 20px;
  padding-left: 23px;
}

.cell.name.root {
  padding-left: 4px;
}

.cell.name svg {
  width: 16px;
  height: 16px;
  flex: none;
  margin-right: 5px;
}

.arrow {
  position: absolute;
  left: 10px;
  top: 5px;
  border: 5px solid transparent;
  border-left: 7px solid #8a8a8a;
  border-right: none;
}

.insert {
  color: #444;
  font-size: 11px;
}

.scrolls {
  height: 20px;
  flex: none;
  display: flex;
  gap: 3px;
  margin: 0 0 0 6px;
  padding-bottom: 1px;
}

.sbar {
  display: flex;
  align-items: stretch;
  height: 18px;
  flex: 1;
  background: #eceded;
  border: 1px solid #c8cacc;
  box-sizing: border-box;
}

.sbar:first-child {
  flex: 0 0 127px;
}

.sarrow {
  width: 15px;
  position: relative;
}

.sarrow::after {
  content: "";
  position: absolute;
  top: 3px;
  left: 4px;
  border: 5px solid transparent;
  border-right: none;
  border-left: 5px solid #888;
}

.sarrow.l::after {
  border-left: none;
  border-right: 5px solid #888;
}

.track {
  flex: 1;
  border-left: 1px solid #d5d6d8;
  border-right: 1px solid #d5d6d8;
}

.thumb {
  width: 62%;
  height: 100%;
  box-sizing: border-box;
  background: linear-gradient(#fff, #e4e5e6);
  border: 1px solid #fff;
  outline: 1px solid #c8cacc;
  outline-offset: -1px;
  text-align: center;
  line-height: 14px;
  font-size: 9px;
  color: #888;
  letter-spacing: 0;
  font-family: "Liberation Sans", sans-serif;
}

/* graphics */

.viewport {
  flex: 1;
  position: relative;
  background: #292c2e;
  overflow: hidden;
}

.model {
  position: absolute;
  left: 0;
  top: 0;
  width: 1626px;
  height: 824px;
}

.viewbar {
  position: absolute;
  left: 667px;
  top: 6px;
  height: 28px;
  box-sizing: border-box;
  display: flex;
  background: #fbfbfb;
  border: 1px solid #c8cacc;
  padding-left: 4px;
}

.vb {
  width: 27.700px;
  height: 26px;
  box-sizing: border-box;
  display: flex;
  align-items: center;
  justify-content: center;
  border-left: 1px solid #d5d6d8;
  flex: none;
}

.vb.on {
  background: #dcddde;
  border-top: 2px solid #9a9c9e;
}

.vb svg {
  width: 19px;
  height: 19px;
}

/* status */

.status {
  height: 47px;
  flex: none;
  display: flex;
  position: relative;
  align-items: flex-end;
  box-sizing: border-box;
  background: #eff0f2;
  border-top: 2px solid #8b8b8b;
  padding: 0 0 5px 7px;
  gap: 4px;
}

.sbtn {
  width: 22px;
  height: 22px;
  box-sizing: border-box;
  border: 1px solid #c2c4c6;
  display: flex;
  align-items: center;
  justify-content: center;
}

.sbtn.on {
  background: #e0e1e3;
  border-color: #8e8e8e;
}

.sbtn svg {
  width: 18px;
  height: 18px;
}

.msgs {
  margin-left: 5px;
  padding-left: 19px;
  border-left: 1px solid #cfd0d2;
  height: 28px;
  position: relative;
  font-size: 11px;
  color: #3e3e3e;
  font-family: "Liberation Sans", "Noto Sans CJK SC", sans-serif;
}

.msgs p {
  margin: 0;
  height: 17px;
  line-height: 17px;
  white-space: nowrap;
  position: relative;
  top: -7px;
}

.msgs .m1 {
  font-size: 10.300px;
}

.dot {
  position: absolute;
  left: -9px;
  top: 6px;
  width: 5px;
  height: 5px;
  border-radius: 50%;
  background: #1b6485;
}

.sright {
  margin-left: auto;
  display: flex;
  align-items: center;
  height: 42px;
  align-self: center;
  padding-right: 20px;
  position: relative;
  top: 4px;
}

.sep {
  width: 1px;
  height: 30px;
  background: #cfd0d2;
}

.sep.s2 {
  margin-left: 31px;
}

.lights {
  display: flex;
  align-items: center;
  gap: 2px;
  margin-left: 5px;
  width: 30px;
}

.lights i {
  width: 6px;
  height: 6px;
  border-radius: 50%;
  background: #dcdcdc;
}

.lights i:first-child {
  width: 10px;
  height: 10px;
  background: #c8c8c8;
}

.sep.s3 {
  margin-right: 5px;
}

.flag {
  width: 14px;
  height: 20px;
}

.sep.s4 {
  margin: 0 4px 0 20px;
}

.srb {
  width: 39px;
  height: 28px;
  box-sizing: border-box;
  border: 1px solid #bfc0c2;
  border-radius: 3px;
  display: flex;
  align-items: center;
  justify-content: center;
  margin-right: 7px;
  background: linear-gradient(#fafafa, #eaeaea);
}

.srb.off {
  background: #eff0f2;
  border-color: #d5d6d8;
}

.srb svg {
  width: 18px;
  height: 18px;
}

.filter {
  margin-left: 84px;
  width: 163px;
  height: 20px;
  box-sizing: border-box;
  background: #fbfbfb;
  border: 1px solid #c8cacc;
  display: flex;
  align-items: center;
  justify-content: space-between;
  padding: 0 5px 0 8px;
  color: #666;
}

/* taskbar */

.taskbar {
  height: 40px;
  display: flex;
  position: relative;
  background: linear-gradient(90deg, #17282f, #1a262e);
  color: #eee;
}

.task {
  width: 48px;
  height: 40px;
  display: flex;
  align-items: center;
  justify-content: center;
  box-sizing: border-box;
  flex: none;
}

.task svg {
  width: 24px;
  height: 24px;
}

.t-start svg {
  width: 20px;
  height: 20px;
}

.t-fan {
  width: 52px;
}

.t-app {
  width: 49px;
}

.t-app.first {
  margin-left: 4px;
}

.t-app.open {
  border-bottom: 2px solid #76b9ed;
}

.t-app.current {
  background: #4a5a63;
  border-bottom: 2px solid #76b9ed;
}

.t-app svg {
  width: 26px;
  height: 26px;
}

.tray {
  position: absolute;
  left: 1440px;
  top: 12px;
  display: flex;
  gap: 8px;
}

.tray svg {
  width: 16px;
  height: 16px;
}

.clock {
  position: absolute;
  left: 1790px;
  width: 80px;
  top: 2px;
  text-align: center;
  font-size: 13px;
  line-height: 18px;
  font-family: "Liberation Sans", sans-serif;
  white-space: nowrap;
}

.notify {
  position: absolute;
  left: 1878px;
  top: 10px;
}

.notify svg {
  width: 18px;
  height: 18px;
  display: block;
}

.notify span {
  position: absolute;
  left: 8px;
  top: 10px;
  width: 15px;
  height: 15px;
  border-radius: 50%;
  border: 1px solid #aaa;
  background: #222;
  text-align: center;
  line-height: 15px;
  font-size: 11px;
  font-family: "Liberation Sans", sans-serif;
}

/* watermark over the status bar corner */

.watermark {
  position: absolute;
  left: 1708px;
  top: 1013px;
  width: 212px;
  height: 62px;
  background: rgba(235, 235, 235, 0.22);
  pointer-events: none;
}

.watermark svg {
  position: absolute;
  left: 2px;
  top: 1px;
  width: 58px;
  height: 58px;
}

.watermark b {
  position: absolute;
  left: 70px;
  top: 3px;
  font-size: 31px;
  line-height: 36px;
  color: rgba(56, 140, 90, 0.75);
  letter-spacing: 1px;
  white-space: nowrap;
}

.watermark small {
  position: absolute;
  left: 36px;
  top: 42px;
  font-size: 15px;
  color: rgba(255, 255, 255, 0.18);
  white-space: nowrap;
  font-family: "Liberation Sans", sans-serif;
}

/* dialog */

.dialog {
  position: absolute;
  left: 1402px;
  top: 65px;
  width: 264px;
  height: 846px;
  box-sizing: border-box;
  border: 4px solid #c4c8ca;
  background: #fcfcfc;
  display: flex;
  flex-direction: column;
}

.dtitle {
  height: 19px;
  flex: none;
  background: linear-gradient(#fafafa, #f2f2f2);
  border-bottom: 1px solid #dcdddf;
  text-align: center;
  font-weight: 700;
  font-size: 13px;
  line-height: 18px;
  color: #aaa;
  position: relative;
}

.dtitle span {
  position: absolute;
  right: 6px;
  top: 0;
  font-size: 11px;
  color: #bbb;
}

.dtabs {
  height: 20px;
  flex: none;
  display: flex;
  background: #eff0f2;
  border-bottom: 1px solid #c8cacc;
  font-weight: 700;
  font-size: 13px;
  color: #777;
  box-sizing: content-box;
}

.dtab {
  width: 38px;
  height: 20px;
  box-sizing: border-box;
  line-height: 20px;
  text-align: center;
  border-right: 1px solid #d5d6d8;
}

.dtab.w3 {
  width: 51px;
}

.dtab.on {
  width: 37px;
  background: #fcfcfc;
  color: #222;
  height: 21px;
  border-right: 1px solid #c8cacc;
}

.dbody {
  flex: 1;
  padding: 0 11px;
  overflow: hidden;
}

h4 {
  margin: 0;
  padding-bottom: 2px;
  font-size: 13px;
  font-weight: 700;
  line-height: 16px;
  color: #444;
}

.dbody > h4:first-child {
  margin-top: 13px;
}

.preview {
  height: 157px;
  display: flex;
  justify-content: center;
}

.preview svg {
  width: 100px;
  height: 100px;
  margin: 27px 0 0 10px;
}

.libline {
  display: flex;
  gap: 6px;
}

.libtext {
  padding-top: 2px;
  font-size: 12px;
  line-height: 18px;
}

.libtext b {
  font-size: 13px;
  color: #444;
}

.tight {
  margin-top: 1px;
}

.qmarks {
  line-height: 18px;
  padding-top: 2px;
  font-size: 11px;
}

hr {
  border: none;
  border-top: 1px solid #d8d9da;
  margin: 10px 0 8px;
  height: 0;
}

.dbtn {
  width: 28px;
  height: 28px;
  flex: none;
  box-sizing: border-box;
  border: 1px solid #c6c8ca;
  border-radius: 3px;
  background: linear-gradient(#fdfdfd, #ebebeb);
  display: flex;
  align-items: center;
  justify-content: center;
}

.dbtn svg {
  width: 22px;
  height: 22px;
}

.dbtn.on {
  background: #d9dadb;
  border-color: #8f9193;
}

.dbtn.off {
  background: #f1f1f1;
  border-color: #dcdddf;
}

.dbtn.big40 {
  width: 40px;
  height: 40px;
}

.dbtn.big40 svg {
  width: 32px;
  height: 32px;
}

.btnrow {
  display: flex;
  gap: 5px;
  align-items: center;
  margin-top: 2px;
}

.dbtn.last {
  margin-left: auto;
  margin-right: 3px;
}

.subline {
  display: flex;
  gap: 5px;
  margin-top: 14px;
  height: 28px;
}

.subname {
  position: relative;
  flex: 1;
}

.subname label {
  position: absolute;
  left: 0;
  top: -12px;
  line-height: 16px;
}

.dinput {
  margin-top: 5px;
  height: 20px;
  box-sizing: border-box;
  border: 1px solid #c8cacc;
  background: #fff;
  width: 200px;
}

.posrot {
  display: flex;
  height: 114px;
}

.pos {
  width: 110px;
  border-right: 1px solid #d5d6d8;
  box-sizing: border-box;
}

.posgrid {
  display: grid;
  grid-template-columns: repeat(3, 28px);
  gap: 5px;
  margin-top: 2px;
}

.rot {
  padding-left: 8px;
  position: relative;
}

.rotgrid {
  display: grid;
  grid-template-columns: repeat(3, 28px);
  grid-template-rows: repeat(3, 28px);
  gap: 5px;
  margin: 2px 0 0 12px;
}

.r0 { grid-column: 2; grid-row: 1; }
.r1 { grid-column: 1; grid-row: 2; }
.r2 { grid-column: 3; grid-row: 2; }
.r3 { grid-column: 2; grid-row: 3; }

.dash {
  margin-left: 3px;
  font-weight: 700;
}

.material {
  height: 63px;
  flex: none;
  box-sizing: border-box;
  background: #eff0f2;
  border-top: 1px solid #c8cacc;
  border-bottom: 1px solid #d5d6d8;
  padding: 7px 10px 0;
}

.select {
  margin-top: 3px;
  height: 19px;
  box-sizing: border-box;
  border: 1px solid #c8cacc;
  display: flex;
  background: linear-gradient(#fdfdfd, #eeeeee);
  line-height: 17px;
  padding-left: 7px;
  font-family: "Liberation Mono", "Noto Sans CJK SC", monospace;
  width: 236px;
}

.select span {
  flex: 1;
}

.selarrow {
  width: 14px;
  border-left: 1px solid #c8cacc;
  text-align: center;
}

.dfoot {
  height: 42px;
  flex: none;
  background: #eff0f2;
  display: flex;
  justify-content: flex-end;
  align-items: flex-start;
  padding: 11px 10px 0 0;
  box-sizing: border-box;
}

.close {
  width: 78px;
  height: 20px;
  border: 1px solid #bfc0c2;
  border-radius: 3px;
  background: linear-gradient(#fdfdfd, #e9e9e9);
  font-family: inherit;
  font-size: 13px;
  font-weight: 700;
  color: #333;
  line-height: 16px;
  padding: 0;
}
</style>
